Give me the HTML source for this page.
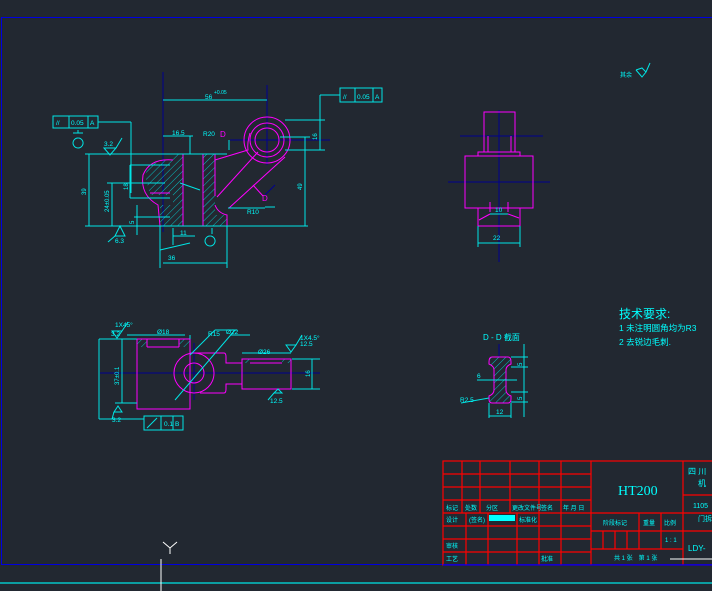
<!DOCTYPE html>
<html><head><meta charset="utf-8"><style>
html,body{margin:0;padding:0;background:#222831;width:712px;height:591px;overflow:hidden}
svg{display:block}
text{font-family:"Liberation Sans","Noto Sans CJK SC",sans-serif;fill:#00ffff}
</style></head><body>
<svg width="712" height="591" viewBox="0 0 712 591" xmlns="http://www.w3.org/2000/svg">
<defs>
<pattern id="h" width="5" height="5" patternUnits="userSpaceOnUse" patternTransform="rotate(45)">
<line x1="0" y1="0" x2="0" y2="5" stroke="#00e5e5" stroke-width="0.8"/>
</pattern>
</defs>
<!-- border -->
<rect x="1.5" y="17.5" width="720" height="547" fill="none" stroke="#0000e0" stroke-width="1"/>
<line x1="0" y1="583" x2="712" y2="583" stroke="#00e5e5" stroke-width="1.2"/>
<line x1="161" y1="559" x2="161" y2="591" stroke="#fff" stroke-width="1"/>
<path d="M163 542 L170 548 L177 542 M170 548 L170 554" stroke="#fff" fill="none" stroke-width="1"/>

<!-- ===== MAIN VIEW ===== -->
<g stroke="#000090" stroke-width="1">
<line x1="163" y1="72" x2="163" y2="232"/>
<line x1="267" y1="85" x2="267" y2="165"/>
<line x1="230" y1="140" x2="330" y2="140"/>
<line x1="265" y1="195" x2="275" y2="185"/>
</g>
<!-- hatched -->
<g fill="url(#h)" stroke="none">
<rect x="173" y="154" width="10" height="72"/>
<rect x="203" y="154" width="12" height="72"/>
<rect x="160" y="205" width="13" height="21"/>
<rect x="215" y="215" width="12" height="11"/>
<path d="M145 175 Q150 160 170 160 L173 160 L173 195 L150 195 Z"/>
</g>
<g stroke="#ff00ff" stroke-width="1" fill="none">
<circle cx="267" cy="140" r="23"/>
<circle cx="267" cy="140" r="17"/>
<circle cx="267" cy="140" r="12"/>
<line x1="173" y1="154" x2="227" y2="154"/>
<line x1="160" y1="226" x2="227" y2="226"/>
<line x1="183" y1="154" x2="183" y2="226"/>
<line x1="203" y1="154" x2="203" y2="226"/>
<line x1="215" y1="154" x2="215" y2="196"/>
<path d="M215 160 L248 150 Q247 143 250 133"/>
<path d="M217 197 L258 152"/>
<path d="M229 208 L285 157"/>
<path d="M227 226 L227 215 Q218 213 215 205"/>
<path d="M173 160 Q150 158 143 175 Q140 195 158 205 L160 226"/>
<path d="M150 193 L170 193"/>
<line x1="253" y1="185" x2="263" y2="196"/>
</g>
<text x="262" y="201" font-size="8" style="fill:#ff00ff">D</text>
<text x="220" y="137" font-size="8" style="fill:#ff00ff">D</text>
<g stroke="#00e5e5" stroke-width="1" fill="none">
<line x1="85" y1="154" x2="227" y2="154"/>
<line x1="85" y1="226" x2="308" y2="226"/>
<line x1="163" y1="100" x2="267" y2="100"/>
<line x1="163" y1="136" x2="193" y2="136"/>
<line x1="89" y1="154" x2="89" y2="226"/>
<line x1="112" y1="183" x2="112" y2="226"/>
<line x1="107" y1="183" x2="165" y2="183"/>
<line x1="130" y1="165" x2="130" y2="198"/>
<line x1="130" y1="165" x2="170" y2="165"/>
<line x1="130" y1="198" x2="170" y2="198"/>
<line x1="137" y1="205" x2="137" y2="235"/>
<line x1="134" y1="217" x2="170" y2="217"/>
<line x1="305" y1="137" x2="305" y2="226"/>
<line x1="280" y1="137" x2="310" y2="137"/>
<line x1="320" y1="120" x2="320" y2="150"/>
<line x1="285" y1="120" x2="325" y2="120"/>
<line x1="285" y1="150" x2="325" y2="150"/>
<line x1="320" y1="95" x2="320" y2="120"/>
<line x1="131" y1="122" x2="131" y2="193"/>
<line x1="98" y1="122" x2="131" y2="122"/>
<line x1="160" y1="226" x2="160" y2="268"/>
<line x1="227" y1="226" x2="227" y2="268"/>
<line x1="163" y1="263" x2="227" y2="263"/>
<line x1="173" y1="228" x2="173" y2="245"/>
<line x1="173" y1="236" x2="195" y2="236"/>
<line x1="160" y1="250" x2="190" y2="243"/>
<line x1="190" y1="136" x2="190" y2="154"/>
<line x1="229" y1="140" x2="229" y2="150"/>
<line x1="265" y1="207" x2="275" y2="207"/>
<line x1="228" y1="208" x2="265" y2="208"/>
<line x1="180" y1="183" x2="200" y2="190"/>
<path d="M115 236 L120 226 L125 236 Z"/>
<path d="M108 242 L115 236"/>
<path d="M104 148 L110 155 L116 148 Z M116 148 L122 138"/>
<path d="M210 236 A5 5 0 1 0 210.1 236"/>
<line x1="212" y1="228" x2="212" y2="234"/>
<path d="M78 138 A5 5 0 1 0 78.1 138"/>
<line x1="73" y1="133" x2="83" y2="133"/>
<line x1="78" y1="130" x2="78" y2="133"/>
</g>
<g fill="none" stroke="#00e5e5" stroke-width="1">
<rect x="53" y="116" width="45" height="12"/>
<line x1="69" y1="116" x2="69" y2="128"/><line x1="88" y1="116" x2="88" y2="128"/>
<rect x="340" y="88" width="42" height="14"/>
<line x1="355" y1="88" x2="355" y2="102"/><line x1="373" y1="88" x2="373" y2="102"/>
<line x1="320" y1="95" x2="340" y2="95"/>
</g>
<g font-size="6.5">
<text x="56" y="125">//</text><text x="71" y="125">0.05</text><text x="90" y="125">A</text>
<text x="343" y="99">//</text><text x="357" y="99">0.05</text><text x="375" y="99">A</text>
<text x="205" y="99">56</text><text x="214" y="94" font-size="5">+0.05</text>
<text x="172" y="135">16.5</text>
<text x="203" y="136">R20</text>
<text x="247" y="214">R10</text>
<text x="168" y="260">36</text>
<text x="180" y="235">11</text>
<text x="115" y="243">6.3</text>
<text x="104" y="146">3.2</text>
</g>
<g font-size="6" transform="rotate(-90)">
<text x="-195" y="86">39</text>
<text x="-212" y="109">24±0.05</text>
<text x="-190" y="128">18</text>
<text x="-190" y="302">49</text>
<text x="-140" y="317">16</text>
<text x="-224" y="134">5</text>
</g>

<!-- ===== LOWER VIEW ===== -->
<line x1="100" y1="373" x2="320" y2="373" stroke="#000090" stroke-width="1"/>
<line x1="194" y1="343" x2="194" y2="400" stroke="#000090" stroke-width="1"/>
<g fill="url(#h)"><rect x="137" y="339" width="10" height="8"/><rect x="179" y="339" width="11" height="8"/><rect x="242" y="359" width="8" height="4"/><rect x="282" y="359" width="9" height="4"/></g>
<g stroke="#ff00ff" stroke-width="1" fill="none">
<rect x="137" y="339" width="53" height="70"/>
<line x1="147" y1="347" x2="179" y2="347"/>
<line x1="147" y1="339" x2="147" y2="347"/><line x1="179" y1="339" x2="179" y2="347"/>
<circle cx="194" cy="373" r="20"/>
<circle cx="194" cy="373" r="10"/>
<path d="M190 353 L190 353 L224 353 Q226 353 226 357 L226 363 L242 363"/>
<path d="M190 393 L190 409 M200 393 L224 393 Q226 393 226 389 L226 384 L242 384"/>
<rect x="242" y="359" width="49" height="30"/>
<line x1="250" y1="363" x2="282" y2="363"/>
</g>
<g stroke="#00e5e5" stroke-width="1" fill="none">
<line x1="99" y1="339" x2="99" y2="419"/>
<line x1="99" y1="339" x2="137" y2="339"/>
<line x1="122" y1="339" x2="122" y2="403"/>
<line x1="115" y1="403" x2="137" y2="403"/>
<line x1="99" y1="419" x2="144" y2="419"/>
<line x1="127" y1="335" x2="185" y2="335"/>
<line x1="190" y1="335" x2="190" y2="339"/>
<line x1="292" y1="359" x2="320" y2="359"/>
<line x1="292" y1="389" x2="320" y2="389"/>
<line x1="312" y1="359" x2="312" y2="389"/>
<line x1="242" y1="353" x2="291" y2="353"/>
<line x1="175" y1="400" x2="235" y2="330"/>
<line x1="190" y1="355" x2="215" y2="330"/>
<line x1="215" y1="330" x2="237" y2="330"/>
<line x1="230" y1="335" x2="250" y2="335"/>
<path d="M112 331 L117 338 L122 331 Z M122 331 L128 322"/>
<path d="M114 412 L118 406 L122 412 Z M114 412 L112 419"/>
<path d="M274 393 L278 389 L282 393 Z M274 393 L268 400"/>
<path d="M286 345 L291 352 L296 345 Z M296 345 L302 335"/>
<rect x="144" y="416" width="39" height="14"/>
<line x1="161" y1="416" x2="161" y2="430"/><line x1="173" y1="416" x2="173" y2="430"/>
<line x1="147" y1="428" x2="157" y2="418"/>
</g>
<g font-size="6.5">
<text x="115" y="327">1X45°</text><text x="111" y="336">3.2</text>
<text x="157" y="334">Ø18</text>
<text x="208" y="336">R15</text><text x="226" y="334">Ø22</text>
<text x="258" y="354">Ø26</text>
<text x="300" y="340">1X4.5°</text><text x="300" y="346">12.5</text>
<text x="112" y="422">3.2</text>
<text x="270" y="403">12.5</text>
<text x="164" y="426">0.1</text><text x="175" y="426">B</text>
</g>
<g font-size="6" transform="rotate(-90)">
<text x="-385" y="119">37±0.1</text>
<text x="-377" y="310">16</text>
</g>

<!-- ===== RIGHT TOP VIEW ===== -->
<g stroke="#000090" stroke-width="1">
<line x1="499" y1="110" x2="499" y2="262"/>
<line x1="460" y1="136" x2="543" y2="136"/>
<line x1="448" y1="182" x2="550" y2="182"/>
</g>
<g stroke="#ff00ff" stroke-width="1" fill="none">
<rect x="484" y="112" width="31" height="40"/>
<line x1="488" y1="136" x2="488" y2="152"/><line x1="511" y1="136" x2="511" y2="152"/>
<rect x="478" y="152" width="42" height="4"/>
<rect x="465" y="156" width="68" height="52"/>
<rect x="478" y="208" width="42" height="18"/>
<line x1="490" y1="202" x2="490" y2="212"/><line x1="508" y1="202" x2="508" y2="212"/>
<path d="M479 220 L490 214 M508 214 L519 218"/>
</g>
<g stroke="#00e5e5" stroke-width="1">
<line x1="478" y1="226" x2="478" y2="247"/><line x1="520" y1="226" x2="520" y2="247"/>
<line x1="478" y1="243" x2="520" y2="243"/>
<line x1="490" y1="214" x2="508" y2="214"/>
</g>
<text x="493" y="240" font-size="6.5">22</text>
<text x="495" y="212" font-size="6.5">10</text>

<!-- roughness top right -->
<text x="620" y="77" font-size="6">其余</text>
<path d="M636 70 L642 68 L646 72 L642 77 L636 70 M646 72 L650 63" stroke="#00e5e5" fill="none" stroke-width="1"/>

<!-- tech requirements -->
<text x="619" y="318" font-size="12">技术要求:</text>
<text x="619" y="331" font-size="8.5">1 未注明圆角均为R3</text>
<text x="619" y="345" font-size="8.5">2 去锐边毛刺.</text>

<!-- D-D -->
<text x="483" y="340" font-size="8">D - D 截面</text>
<line x1="499" y1="344" x2="499" y2="357" stroke="#000090"/>
<path d="M492 357 L508 357 Q511 357 511 362 L511 364 Q506 366 506 370 L506 390 Q506 394 511 396 L511 399 Q511 403 508 403 L492 403 Q489 403 489 399 L489 396 Q494 394 494 390 L494 370 Q494 366 489 364 L489 362 Q489 357 492 357 Z" fill="url(#h)" stroke="#ff00ff" stroke-width="1"/>
<g stroke="#00e5e5" stroke-width="1">
<line x1="524" y1="344" x2="524" y2="417"/>
<line x1="511" y1="357" x2="528" y2="357"/><line x1="511" y1="367" x2="528" y2="367"/>
<line x1="511" y1="392" x2="528" y2="392"/><line x1="511" y1="402" x2="528" y2="402"/>
<line x1="477" y1="380" x2="517" y2="380"/>
<line x1="489" y1="403" x2="489" y2="418"/><line x1="511" y1="403" x2="511" y2="418"/>
<line x1="489" y1="416" x2="511" y2="416"/>
<line x1="461" y1="403" x2="489" y2="398"/>
</g>
<text x="477" y="378" font-size="6.5">6</text>
<text x="496" y="414" font-size="6.5">12</text>
<text x="460" y="402" font-size="6.5">R2.5</text>
<g font-size="6" transform="rotate(-90)"><text x="-366" y="522">5</text><text x="-400" y="522">5</text></g>

<!-- ===== TITLE BLOCK ===== -->
<g stroke="#ff0000" stroke-width="1.2" fill="none">
<rect x="443" y="461" width="280" height="104"/>
<line x1="443" y1="474" x2="591" y2="474"/>
<line x1="443" y1="487" x2="591" y2="487"/>
<line x1="443" y1="500" x2="591" y2="500"/>
<line x1="443" y1="513" x2="712" y2="513"/>
<line x1="443" y1="526" x2="591" y2="526"/>
<line x1="443" y1="539" x2="591" y2="539"/>
<line x1="443" y1="552" x2="591" y2="552"/>
<line x1="462" y1="461" x2="462" y2="513"/>
<line x1="480" y1="461" x2="480" y2="513"/>
<line x1="510" y1="461" x2="510" y2="513"/>
<line x1="539" y1="461" x2="539" y2="565"/>
<line x1="561" y1="461" x2="561" y2="565"/>
<line x1="466" y1="513" x2="466" y2="565"/>
<line x1="488" y1="513" x2="488" y2="565"/>
<line x1="517" y1="513" x2="517" y2="565"/>
<line x1="591" y1="461" x2="591" y2="565"/>
<line x1="683" y1="461" x2="683" y2="565"/>
<line x1="683" y1="495" x2="712" y2="495"/>
<line x1="591" y1="531" x2="712" y2="531"/>
<line x1="591" y1="549" x2="683" y2="549"/>
<line x1="639" y1="513" x2="639" y2="549"/>
<line x1="661" y1="513" x2="661" y2="549"/>
<line x1="603" y1="531" x2="603" y2="549"/>
<line x1="615" y1="531" x2="615" y2="549"/>
<line x1="627" y1="531" x2="627" y2="549"/>
</g>
<line x1="443" y1="565" x2="712" y2="565" stroke="#0000e0" stroke-width="1.2"/>
<line x1="670" y1="559" x2="712" y2="559" stroke="#fff" stroke-width="1"/>
<rect x="489" y="515" width="26" height="6" fill="#00ffff"/>
<text x="618" y="495" font-size="14" style="font-family:'Liberation Serif',serif;fill:#00ffff">HT200</text>
<g font-size="6">
<text x="446" y="510">标记</text><text x="465" y="510">处数</text><text x="486" y="510">分区</text><text x="512" y="510">更改文件号</text><text x="541" y="510">签名</text><text x="563" y="510">年 月 日</text>
<text x="446" y="522">设计</text><text x="469" y="522">(签名)</text><text x="519" y="522">标准化</text>
<text x="446" y="548">审核</text>
<text x="446" y="561">工艺</text><text x="541" y="561">批准</text>
<text x="603" y="525">阶段标记</text><text x="643" y="525">重量</text><text x="664" y="525">比例</text>
<text x="665" y="542">1 : 1</text>
<text x="614" y="560">共 1 张　第 1 张</text>
</g>
<text x="688" y="474" font-size="8">四 川</text>
<text x="698" y="486" font-size="8">机</text>
<text x="693" y="508" font-size="7">1105</text>
<text x="698" y="521" font-size="7">门拆</text>
<text x="688" y="551" font-size="8">LDY-</text>
</svg>
</body></html>
